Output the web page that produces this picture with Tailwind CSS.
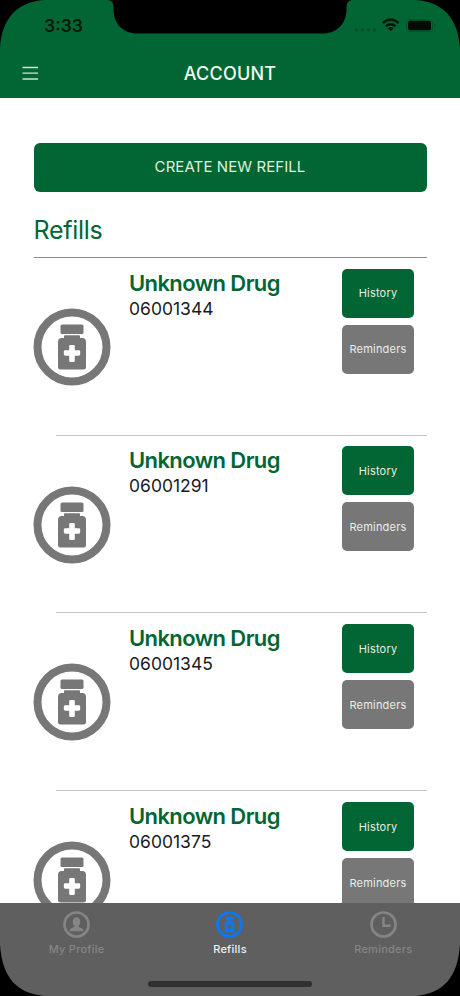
<!DOCTYPE html>
<html lang="en">
<head>
<meta charset="utf-8">
<title>Account</title>
<script src="https://cdn.jsdelivr.net/npm/@tailwindcss/browser@4"></script>
</head>
<body class="bg-black">
<svg class="hidden">
  <symbol id="bottle" viewBox="0 0 78 78">
    <circle cx="39" cy="39" r="34.5" fill="none" stroke="currentColor" stroke-width="8"/>
    <rect x="27.5" y="16.5" width="23" height="9.5" rx="1.5" fill="currentColor"/>
    <path fill="currentColor" fill-rule="evenodd" d="M32 27.3H46Q47 27.3 47 28.3V30H50Q53 30.5 53 34V59Q53 61.500 50.500 61.500H27.500Q25 61.500 25 59V34Q25 30.500 28 30H31V28.300Q31 27.300 32 27.300ZM37.500 37Q36.200 37 36.200 38.300V42.200H32.300Q30.800 42.200 30.800 43.500V46.300Q30.800 47.700 32.300 47.700H36.200V52.500Q36.200 54 37.500 54H40.500Q41.800 54 41.800 52.500V47.700H45.700Q47.200 47.700 47.200 46.300V43.500Q47.200 42.200 45.700 42.200H41.800V38.300Q41.800 37 40.500 37Z"/>
  </symbol>
</svg>
<div class="relative flex h-[996px] w-[460px] flex-col overflow-hidden bg-white font-['Inter',sans-serif]">
  <header class="h-[98px] shrink-0 bg-[#026634]">
    <div class="flex h-[50px] items-center justify-between pl-[44px] pr-[23px]">
      <span class="pt-[2px] text-[17.500px] font-semibold leading-[20px] text-[#061a0d]">3:33</span>
      <svg class="h-[20px] w-[84px]" viewBox="0 0 84 20">
        <g fill="#07502b"><circle cx="3.500" cy="15" r="1.700"/><circle cx="9.500" cy="15" r="1.700"/><circle cx="15.500" cy="15" r="1.700"/><circle cx="21.500" cy="15" r="1.700"/></g>
        <g fill="none" stroke="#03150a" stroke-width="2.500"><path d="M29.700 8Q37.700 1 45.700 8"/><path d="M32.900 11.300Q37.700 7.200 42.500 11.300"/></g>
        <path fill="#03150a" d="M34.800 13.200Q37.700 11 40.600 13.200L37.700 16.300Z"/>
        <rect x="53.500" y="4.500" width="26" height="12" rx="3.500" fill="none" stroke="#07502b"/>
        <rect x="55" y="5.800" width="23" height="9.500" rx="2" fill="#020c06"/>
        <path d="M81 8.500Q83.500 10.500 81 12.500Z" fill="#07502b"/>
      </svg>
    </div>
    <div class="grid h-[48px] grid-cols-[1fr_auto_1fr] items-center">
      <svg class="ml-[22px] h-[16px] w-[17px]" viewBox="0 0 17 16" stroke="#cfe6cf" stroke-width="1.300"><path d="M.5 1.500H16M.5 7.200H16M.5 13H16"/></svg>
      <h1 class="text-[18px] font-medium leading-[24px] tracking-[0.200px] text-[#f2faf0]">ACCOUNT</h1>
      <span></span>
    </div>
  </header>
  <main class="flex flex-1 flex-col overflow-hidden px-[33.500px] pt-[44.500px]">
    <button class="h-[49px] w-full shrink-0 rounded-[6px] bg-[#026634] pt-px text-[15px] tracking-[0.080px] text-[#dcf2dc]">CREATE NEW REFILL</button>
    <h2 class="mt-[20.500px] h-[46px] shrink-0 border-b border-[#8d8d8d] text-[25px] leading-[37px] tracking-[-0.300px] text-[#026634]">Refills</h2>
    <ul id="list" class="shrink-0"></ul>
  </main>
  <nav class="grid h-[93px] shrink-0 grid-cols-3 bg-[#5f5f5f] text-center text-[11px] font-medium leading-[14px] tracking-[0.250px] text-[#858585]">
    <a class="flex flex-col items-center pt-[8px]">
      <svg class="mb-[4px] h-[27px] w-[27px]" viewBox="0 0 27 27"><circle cx="13.500" cy="13.500" r="12" fill="none" stroke="currentColor" stroke-width="2.700"/><ellipse cx="13.500" cy="10.800" rx="3.700" ry="4.500" fill="currentColor"/><path fill="currentColor" d="M11.500 13H15.500V16Q20.500 17 20.500 20.200H6.500Q6.500 17 11.500 16Z"/></svg>
      <span>My Profile</span>
    </a>
    <a class="flex flex-col items-center pt-[8px]">
      <svg class="mb-[4px] h-[27px] w-[27px] text-[#0a78f5]"><use href="#bottle"/></svg>
      <span class="text-[#f0f0f0]">Refills</span>
    </a>
    <a class="flex flex-col items-center pt-[8px]">
      <svg class="mb-[4px] h-[27px] w-[27px]" viewBox="0 0 27 27" fill="none" stroke="currentColor"><circle cx="13.500" cy="13.500" r="12" stroke-width="2.700"/><path stroke-width="2.500" d="M13.500 6V14.800H20.500"/></svg>
      <span>Reminders</span>
    </a>
  </nav>
  <div class="absolute bottom-[9px] left-[148px] h-[6px] w-[164px] rounded-full bg-[#303030]"></div>
  <svg class="absolute inset-0 h-[996px] w-[460px]" viewBox="0 0 460 996" fill="#000">
    <path d="M0 0H44C17 2 2 18 0 48ZM460 0H416C443 2 458 18 460 48ZM0 996H44C17 993 2 978 0 944ZM460 996H416C443 993 458 978 460 944Z"/>
    <path d="M108 0Q113.500 1 113.500 7V11C114.500 25 124 33.500 137 33.500H323C336 33.500 345.500 25 346.500 11V7Q346.500 1 352 0Z"/>
  </svg>
</div>
<template id="row">
  <li class="flex h-[177.700px]">
    <svg class="mt-[50px] h-[78px] w-[78px] shrink-0 -ml-px text-[#777777]"><use href="#bottle"/></svg>
    <div class="ml-[18.500px] flex-1 pt-[10.500px]">
      <h3 class="whitespace-nowrap text-[22px] font-semibold leading-[28px] tracking-[-0.600px] text-[#026634]">Unknown Drug</h3>
      <p class="text-[17.500px] leading-[24px] text-[#1b1b1b]"></p>
    </div>
    <div class="mr-[12.500px] flex w-[72px] flex-col gap-[7px] pt-[10.700px] text-[11px] tracking-[0.200px] text-[#e6eee6]">
      <button class="h-[49px] rounded-[5px] bg-[#026634] pt-px">History</button>
      <button class="h-[49px] rounded-[5px] bg-[#777777] pt-px">Reminders</button>
    </div>
  </li>
</template>
<script>
const list = document.getElementById('list');
['06001344', '06001291', '06001345', '06001375'].forEach((id, i) => {
  const li = document.getElementById('row').content.cloneNode(true);
  li.querySelector('p').textContent = id;
  if (i) {
    const hr = document.createElement('li');
    hr.className = 'ml-[22.500px] -mt-px h-px bg-[#c4c4c4]';
    list.append(hr);
  }
  list.append(li);
});
</script>
</body>
</html>
